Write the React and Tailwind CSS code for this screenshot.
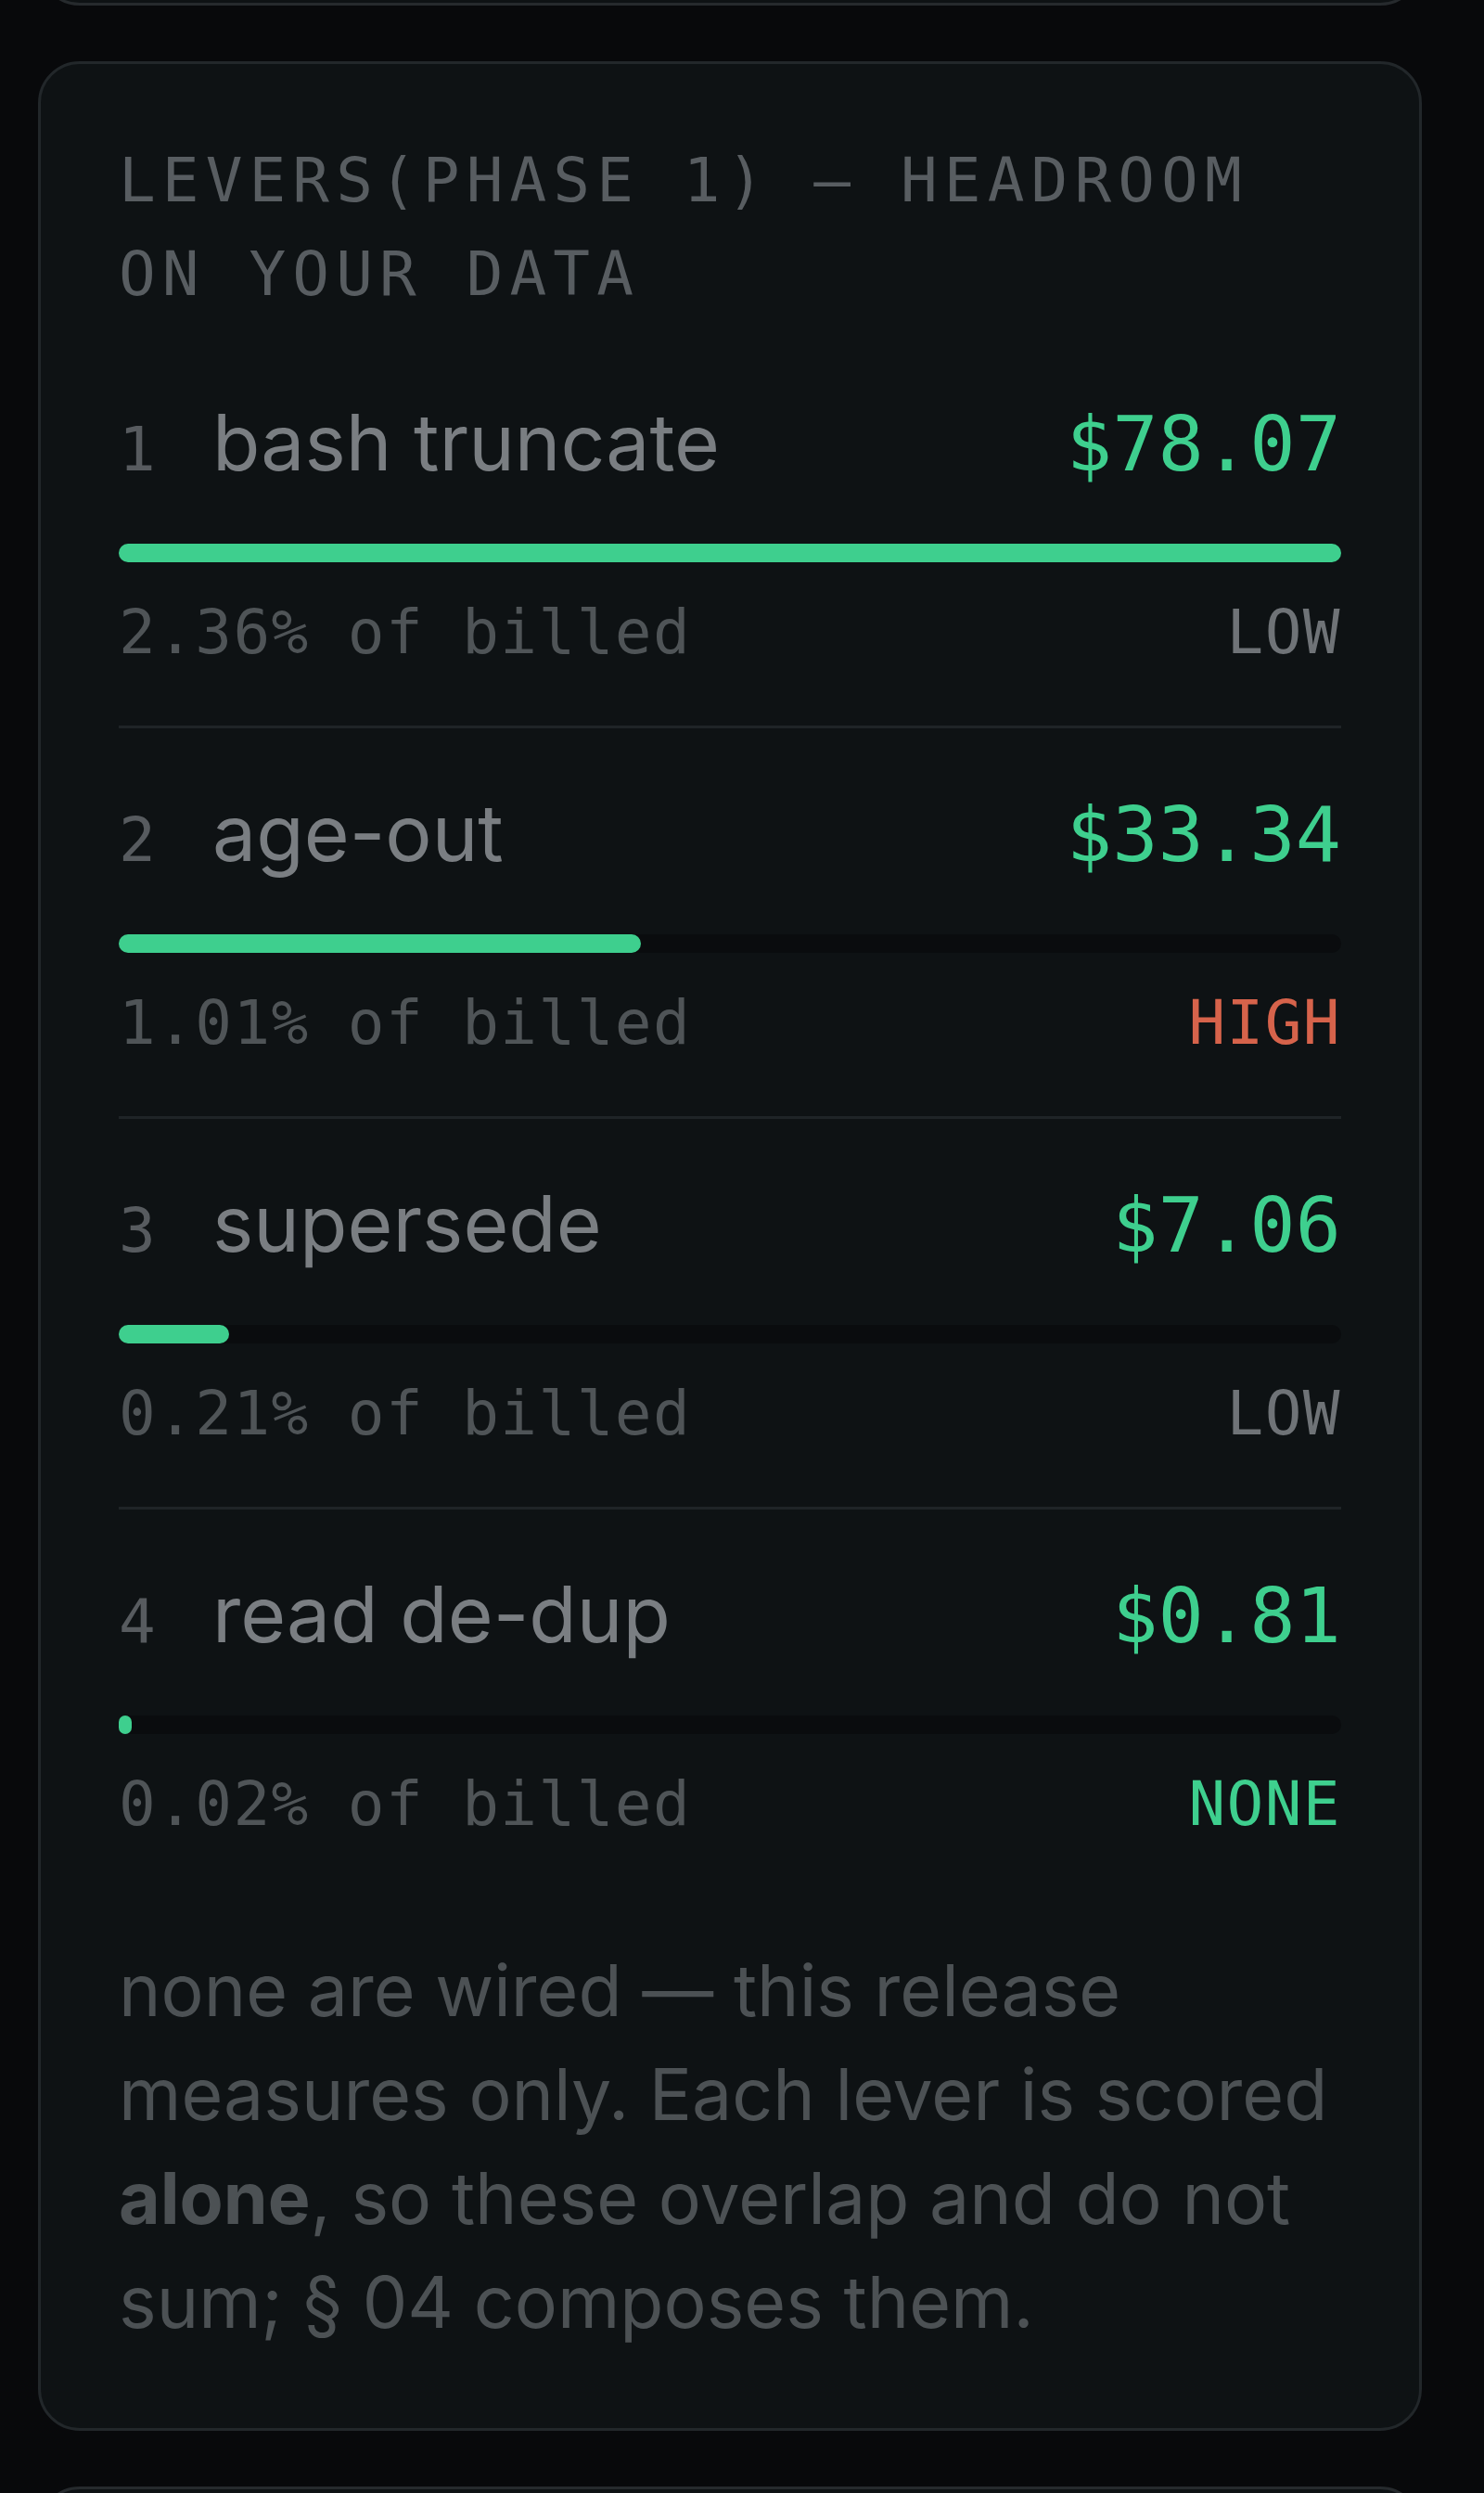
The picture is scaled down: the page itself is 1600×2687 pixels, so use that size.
const levers = [
  { n: 1, name: 'bash truncate', usd: 78.07, pct: '2.36', risk: 'LOW' },
  { n: 2, name: 'age-out', usd: 33.34, pct: '1.01', risk: 'HIGH' },
  { n: 3, name: 'supersede', usd: 7.06, pct: '0.21', risk: 'LOW' },
  { n: 4, name: 'read de-dup', usd: 0.81, pct: '0.02', risk: 'NONE' },
]

const riskColor = {
  LOW: 'text-[#6f7377]',
  HIGH: 'text-[#d6634b]',
  NONE: 'text-[#3ecf8e]',
}

const mono = "font-['DejaVu_Sans_Mono',monospace]"
const sans = "font-['Inter',sans-serif]"

function LeverRow({ lever, max, last }) {
  const width = (lever.usd / max) * 100
  return (
    <div className={`pt-[63px] ${last ? '' : 'pb-[60px] border-b-[3px] border-[#1f2427]'}`}>
      <div className="flex items-baseline justify-between leading-[100px]">
        <div className="flex items-baseline">
          <span className={`${mono} w-[101px] shrink-0 text-[66px] text-[#575b5f]`}>{lever.n}</span>
          <span className={`${sans} text-[84px] text-[#7a7e82]`}>{lever.name}</span>
        </div>
        <span className={`${mono} text-[82px] text-[#3ecf8e]`}>${lever.usd.toFixed(2)}</span>
      </div>
      <div className="mt-[51px] h-[20px] rounded-full bg-[#0a0c0e]">
        <div className="h-full rounded-full bg-[#3ecf8e]" style={{ width: `${width}%` }} />
      </div>
      <div className={`${mono} mt-[36px] flex items-baseline justify-between text-[66px] leading-[80px] tracking-[1.4px]`}>
        <span className="text-[#4f5457]">{lever.pct}% of billed</span>
        <span className={riskColor[lever.risk]}>{lever.risk}</span>
      </div>
    </div>
  )
}

export default function App() {
  const max = Math.max(...levers.map(l => l.usd))

  return (
    <div className="min-h-screen overflow-hidden bg-[#08090b]">
      <div className="ml-[41px] flex w-[1492px] flex-col gap-[60px]">
        {/* tail of the card above */}
        <div className="-mt-[94px] h-[100px] rounded-[45px] border-[3px] border-[#262a2d] bg-[#0e1214]" />

        <section className="rounded-[45px] border-[3px] border-[#22272a] bg-[#0e1214] px-[84px] pt-[75px] pb-[80px]">
          <h2 className={`${mono} mb-[18px] text-[66px] leading-[101px] tracking-[7.1px] text-[#585d61] uppercase`}>
            Levers(phase 1) — headroom on your data
          </h2>

          {levers.map((lever, i) => (
            <LeverRow key={lever.n} lever={lever} max={max} last={i === levers.length - 1} />
          ))}

          <p className={`${sans} mt-[104px] text-[77px] leading-[112px] text-[#4c5154]`}>
            none are wired — this release measures only. Each lever is scored{' '}
            <strong className="font-bold">alone</strong>, so these overlap and do not sum; § 04
            composes them.
          </p>
        </section>

        <div className="h-[100px] rounded-[45px] border-[3px] border-[#262a2d] bg-[#0e1214]" />
      </div>
    </div>
  )
}
